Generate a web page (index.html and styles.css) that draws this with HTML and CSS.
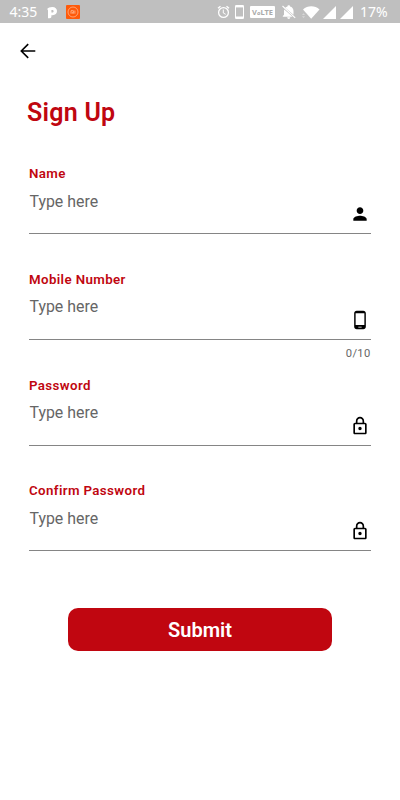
FILE: index.html
```html
<!DOCTYPE html>
<html lang="en">
<head>
<meta charset="utf-8">
<title>Sign Up</title>
<link rel="stylesheet" href="styles.css">
</head>
<body>
<div class="status">
  <span class="time">4:35</span>
  <svg class="pocket" width="11" height="13" viewBox="0 0 11 13"><path fill-rule="evenodd" d="M0 3.2C1 1.7 3 .9 5.3.9C8.3.9 10 2.6 10 5.1C10 7.7 8.3 9.2 5.7 9.2H4.4V10.5C4.4 11.6 3.8 12.2 2.6 12.2H1V4.4C1 3.7.7 3.3 0 3.2ZM4.4 4V6.5H5.2C6.1 6.5 6.6 6 6.6 5.2C6.6 4.4 6.1 4 5.2 4Z" fill="#fff"/></svg>
  <svg class="mi" width="14" height="14" viewBox="0 0 14 14"><rect width="14" height="14" rx="1" fill="#ff5a0a"/><circle cx="7" cy="7" r="5" fill="none" stroke="#ffb48c" stroke-width=".8"/><path d="M5 8.7V5.7H7.4V8.7M6.3 7V8.7M8.9 5.5V8.7" fill="none" stroke="#ffc09d" stroke-width=".8"/></svg>
  <div class="system">
    <svg width="13" height="14" viewBox="0 0 13 14" fill="none" stroke="#fff"><circle cx="6.5" cy="7.5" r="4.9" stroke-width="1.3"/><path d="M1 3.3L3.5 1.2M9.5 1.2L12 3.3" stroke-width="1.4"/><path d="M6.3 4.5V8L8.7 9.3"/></svg>
    <svg width="9" height="14" viewBox="0 0 9 14"><rect width="9" height="14" rx="1.3" fill="#fff"/><path d="M1 2.4H8V11.5H1Z" fill="#bfbfbf"/></svg>
    <span class="volte">V<i>o</i>LTE</span>
    <svg width="14" height="14" viewBox="0 0 14 14"><path d="M3.2 2.7C3.8 2 4.6 1.6 5.5 1.4V.8C5.5-.1 8-.1 8 .8V1.4C10.3 1.9 11.5 3.8 11.5 6V9.8L3.2 2.7ZM2.3 4.4L10.5 11.7H.8V10.9L2 9.8V6C2 5.4 2.1 4.8 2.3 4.4ZM5.2 12.3H8.3C8.3 14.4 5.2 14.4 5.2 12.3Z" fill="#fff"/><path d="M.5 1L13.2 12.8" stroke="#fff" stroke-width="1.1"/></svg>
    <svg class="wifi" width="18" height="13" viewBox="0 0 18 13"><path d="M1 3.5C5.5-.7 13-.7 17.5 3.5L9.2 12.8Z" fill="#fff"/><path d="M0 9L1.5 7.3L3 9ZM0 10.3H3L1.5 12Z" fill="#d8d8d8"/></svg>
    <svg width="13" height="13" viewBox="0 0 13 13"><path d="M13 0V13H0Z" fill="#fff"/></svg>
    <svg width="13" height="13" viewBox="0 0 13 13"><path d="M13 0V13H0Z" fill="#fff"/></svg>
    <span class="battery">17%</span>
  </div>
</div>
<div class="toolbar">
  <svg width="16" height="16" viewBox="0 0 16 16"><path d="M15.3 8H1.5M8.2 1.1L1.3 8L8.2 14.9" fill="none" stroke="#000" stroke-width="1.6"/></svg>
</div>
<main>
  <h1>Sign Up</h1>
  <div class="field">
    <div class="label">Name</div>
    <div class="entry"><span class="hint">Type here</span>
      <svg class="icon" viewBox="0 0 24 24"><path d="M12 12c2.21 0 4-1.79 4-4s-1.79-4-4-4-4 1.79-4 4 1.79 4 4 4zm0 2c-2.67 0-8 1.34-8 4v2h16v-2c0-2.66-5.33-4-8-4z"/></svg></div>
  </div>
  <div class="field">
    <div class="label">Mobile Number</div>
    <div class="entry"><span class="hint">Type here</span>
      <svg class="icon" viewBox="0 0 24 24"><path d="M16 1H8C6.34 1 5 2.34 5 4v16c0 1.66 1.34 3 3 3h8c1.66 0 3-1.34 3-3V4c0-1.66-1.34-3-3-3zm-2 20h-4v-1h4v1zm3.25-3H6.75V4h10.5v14z"/></svg></div>
    <div class="counter">0/10</div>
  </div>
  <div class="field">
    <div class="label">Password</div>
    <div class="entry"><span class="hint">Type here</span>
      <svg class="icon" viewBox="0 0 24 24"><path d="M18 8h-1V6c0-2.76-2.24-5-5-5S7 3.24 7 6v2H6c-1.1 0-2 .9-2 2v10c0 1.1.9 2 2 2h12c1.1 0 2-.9 2-2V10c0-1.1-.9-2-2-2zM9 6c0-1.66 1.34-3 3-3s3 1.34 3 3v2H9V6zm9 14H6V10h12v10zm-6-3c1.1 0 2-.9 2-2s-.9-2-2-2-2 .9-2 2 .9 2 2 2z"/></svg></div>
  </div>
  <div class="field">
    <div class="label">Confirm Password</div>
    <div class="entry"><span class="hint">Type here</span>
      <svg class="icon" viewBox="0 0 24 24"><path d="M18 8h-1V6c0-2.76-2.24-5-5-5S7 3.24 7 6v2H6c-1.1 0-2 .9-2 2v10c0 1.1.9 2 2 2h12c1.1 0 2-.9 2-2V10c0-1.1-.9-2-2-2zM9 6c0-1.66 1.34-3 3-3s3 1.34 3 3v2H9V6zm9 14H6V10h12v10zm-6-3c1.1 0 2-.9 2-2s-.9-2-2-2-2 .9-2 2 .9 2 2 2z"/></svg></div>
  </div>
  <button class="submit">Submit</button>
</main>
</body>
</html>
```
FILE: styles.css
```css
* { box-sizing: border-box; }
body { margin: 0; height: 800px; background: #fff; font-family: Roboto, sans-serif; overflow: hidden; }
svg { display: block; flex: none; }
.status { height: 23px; background: #bfbfbf; display: flex; align-items: center; padding: 1px 13px 0 9.5px; color: #fff; }
.time, .battery { font: 14px/20px "Noto Sans", sans-serif; }
.time { width: 37.5px; }
.mi { margin-left: 8px; }
.system { margin-left: auto; display: flex; align-items: center; gap: 6px; }
.system > svg:first-child { margin-right: -1px; }
.volte { width: 25px; height: 12px; border-radius: 1px; background: #fff; color: #aaa; font: bold 7.5px/12px "Noto Sans", sans-serif; text-align: center; }
.volte i { font-size: 6px; }
.volte + svg { margin-left: 1px; }
.wifi + svg { margin-left: -3px; }
.system .wifi + svg + svg { margin-left: -2px; }
.battery { width: 27px; margin-left: 1px; }
.toolbar { height: 55px; padding: 20px 0 0 20px; }
main { padding: 0 29px; display: flex; flex-direction: column; }
h1 { margin: 17px 0 0 -2px; height: 70px; font-size: 25px; line-height: 36px; font-weight: 600; letter-spacing: .25px; color: #c00610; }
.field { height: 105.8px; }
.label { height: 18px; font-size: 13.3px; line-height: 17px; font-weight: 600; letter-spacing: .38px; color: #c00610; }
.entry { height: 51px; border-bottom: 1px solid #858585; display: flex; justify-content: space-between; align-items: flex-start; }
.hint { margin: 7.6px 0 0 .5px; font-size: 15.9px; line-height: 22px; color: #666; }
.icon { width: 20px; height: 20px; margin: 21px 1.5px 0 0; }
.counter { margin: 7.5px .5px 0 0; font-size: 11.2px; line-height: 14px; text-align: right; color: #666; letter-spacing: .3px; }
.submit { width: 264px; height: 43px; margin: 20px auto 0; padding: 1px 0 0; border: 0; border-radius: 10px; background: #c00610; color: #fff; font: 600 20px/42px Roboto, sans-serif; }
```
